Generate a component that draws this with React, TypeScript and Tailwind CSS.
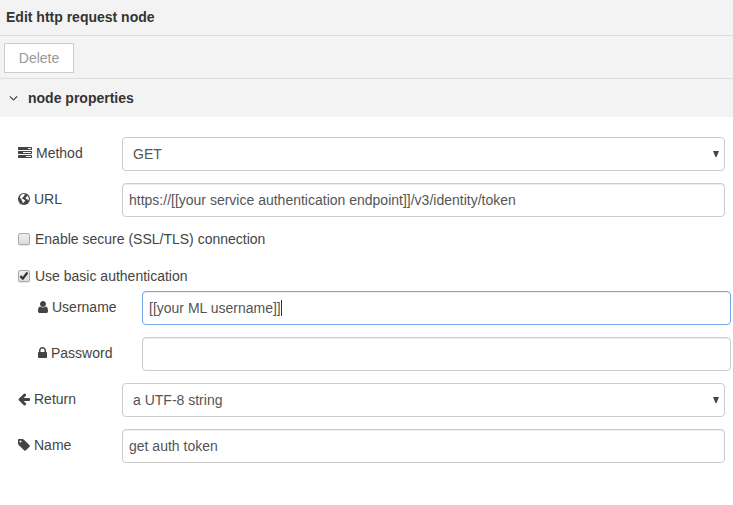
import React from "react";

const glyphs = {
  tasks: "M1024 1408h640v-128h-640v128zm-384-512h1024v-128h-1024v128zm640-512h384v-128h-384v128zm512 832v256q0 26-19 45t-45 19h-1664q-26 0-45-19t-19-45v-256q0-26 19-45t45-19h1664q26 0 45 19t19 45zm0-512v256q0 26-19 45t-45 19h-1664q-26 0-45-19t-19-45v-256q0-26 19-45t45-19h1664q26 0 45 19t19 45zm0-512v256q0 26-19 45t-45 19h-1664q-26 0-45-19t-19-45v-256q0-26 19-45t45-19h1664q26 0 45 19t19 45z",
  user: "M1536 1399q0 109-62.5 187t-150.5 78h-854q-88 0-150.5-78t-62.5-187q0-85 8.5-160.5t31.5-152 58.5-131 94-89 134.5-34.5q131 128 313 128t313-128q76 0 134.5 34.5t94 89 58.5 131 31.5 152 8.5 160.5zm-256-887q0 159-112.5 271.5t-271.5 112.5-271.5-112.5-112.5-271.5 112.5-271.5 271.5-112.5 271.5 112.5 112.5 271.5z",
  lock: "M640 768h512v-192q0-106-75-181t-181-75-181 75-75 181v192zm832 96v576q0 40-28 68t-68 28h-960q-40 0-68-28t-28-68v-576q0-40 28-68t68-28h32v-192q0-184 132-316t316-132 316 132 132 316v192h32q40 0 68 28t28 68z",
  arrow: "M1664 896v128q0 53-32.5 90.5t-84.5 37.5h-704l293 294q38 36 38 90t-38 90l-75 76q-37 37-90 37-52 0-91-37l-651-652q-37-37-37-90 0-52 37-91l651-650q38-38 91-38 52 0 90 38l75 74q38 38 38 91t-38 91l-293 293h704q52 0 84.5 37.5t32.5 90.5z",
  tag: "M576 448q0-53-37.5-90.5t-90.5-37.5-90.5 37.5-37.5 90.5 37.5 90.5 90.5 37.5 90.5-37.5 37.5-90.5zm1067 576q0 53-37 90l-491 492q-39 37-91 37-53 0-90-37l-715-716q-38-37-64.5-101t-26.5-117v-416q0-52 38-90t90-38h416q53 0 117 26.5t102 64.5l715 714q37 39 37 91z",
  angle: "M1395 736q0 13-10 23l-466 466q-10 10-23 10t-23-10l-466-466q-10-10-10-23t10-23l50-50q10-10 23-10t23 10l393 393 393-393q10-10 23-10t23 10l50 50q10 10 10 23z",
};

// Glyph advance widths, in units of 1/128 px at a 14px size.
const widths = { tasks: 1792, user: 1280, lock: 1152, arrow: 1536, tag: 1536, angle: 1152 };

function Icon({ name }: { name: keyof typeof glyphs }) {
  const w = widths[name];
  return (
    <svg className="shrink-0 fill-current" width={w / 128} height={14} viewBox={`${(1792 - w) / 2} 0 ${w} 1792`} aria-hidden="true">
      <path d={glyphs[name]} />
    </svg>
  );
}

function Globe() {
  return (
    <svg className="shrink-0" width="12" height="12" viewBox="0 0 12 12" aria-hidden="true">
      <circle cx="6" cy="6" r="6" fill="#444" />
      <path fill="#fff" d="M4.6 1.1 6.4 1l.6.8-1 .6.4.6-1.4 1-.9 1 .1.7.9.2 1.1.8 1.1.7-.6 1.1-1.1.9-.4.8-.6-.3-.2-1.7-.9-1-.1-1.1L2.3 5.2 1.8 4.2Q2.6 2.2 4.6 1.1Z" />
      <path fill="#fff" d="M8.9 2.2q1.6 1.2 2 3.2l-.2 1.6-.7.6-.6-1.4-1.3-.2-.5-1 .7-1.2.9-.4Z" />
    </svg>
  );
}

function Row({ icon, label, nested, children }: { icon: React.ReactNode; label: string; nested?: boolean; children: React.ReactNode }) {
  return (
    <div className={nested ? "mb-3 ml-5 -mr-1.5 flex h-[34px]" : "mb-3 flex h-[34px]"}>
      <div className="flex h-8 w-[104px] shrink-0 items-center gap-1">
        {icon}
        <span>{label}</span>
      </div>
      {children}
    </div>
  );
}

const box = "flex h-[34px] min-w-0 flex-1 items-center rounded border bg-white text-[#555]";

function Field({ value, focused }: { value: string; focused?: boolean }) {
  return (
    <div className={`${box} px-1.5 shadow-[inset_0_1px_1px_rgba(0,0,0,0.075)] ${focused ? "border-[#72a7e8]" : "border-[#ccc]"}`}>
      <span>{value}</span>
      {focused && <span className="h-4 w-px bg-[#333]" />}
    </div>
  );
}

function Select({ value }: { value: string }) {
  return (
    <div className={`${box} justify-between border-[#ccc] pr-[5px] pl-2.5`}>
      <span>{value}</span>
      <svg width="6" height="6" viewBox="0 0 6 6" className="fill-[#444]">
        <path d="M0 0h6L3.5 6h-1z" />
      </svg>
    </div>
  );
}

function Check({ label, checked }: { label: string; checked?: boolean }) {
  return (
    <div className="flex h-5 items-center gap-[5px]">
      <span className="flex size-3 items-center justify-center rounded-[2px] border border-[#aaa] bg-linear-to-b from-[#eee] to-[#dedede] shadow-[0_1px_1px_rgba(0,0,0,0.1)]">
        {checked && (
          <svg width="10" height="10" viewBox="0 0 10 10" fill="none" stroke="#333" strokeWidth="2.2">
            <path d="M1.3 5.1 3.8 7.5 8.5 1.5" />
          </svg>
        )}
      </span>
      <span>{label}</span>
    </div>
  );
}

export default function App() {
  return (
    <div className="h-[505px] w-[733px] overflow-hidden bg-white font-['Liberation_Sans',Arial,sans-serif] text-[14px] leading-5 text-[#444]">
      <header className="flex h-9 items-center border-b border-[#ddd] bg-[#f3f3f3] pb-px pl-1.5 font-bold text-[#333]">Edit http request node</header>
      <div className="flex h-[43px] items-start border-b border-[#ddd] bg-[#f3f3f3] pt-[7px] pl-1">
        <button className="h-[30px] w-[70px] border border-[#ccc] bg-white text-[#999]">Delete</button>
      </div>
      <div className="flex h-[38px] items-center bg-[#f3f3f3] pl-[9px] font-bold text-[#333]">
        <Icon name="angle" />
        <span className="ml-2.5">node properties</span>
      </div>
      <main className="pt-5 pr-2 pl-[18px]">
        <Row icon={<Icon name="tasks" />} label="Method"><Select value="GET" /></Row>
        <Row icon={<Globe />} label="URL"><Field value="https://[[your service authentication endpoint]]/v3/identity/token" /></Row>
        <Check label="Enable secure (SSL/TLS) connection" />
        <div className="mt-[17px] mb-[5px]"><Check label="Use basic authentication" checked /></div>
        <Row nested icon={<Icon name="user" />} label="Username"><Field value="[[your ML username]]" focused /></Row>
        <Row nested icon={<Icon name="lock" />} label="Password"><Field value="" /></Row>
        <Row icon={<Icon name="arrow" />} label="Return"><Select value="a UTF-8 string" /></Row>
        <Row icon={<Icon name="tag" />} label="Name"><Field value="get auth token" /></Row>
      </main>
    </div>
  );
}
